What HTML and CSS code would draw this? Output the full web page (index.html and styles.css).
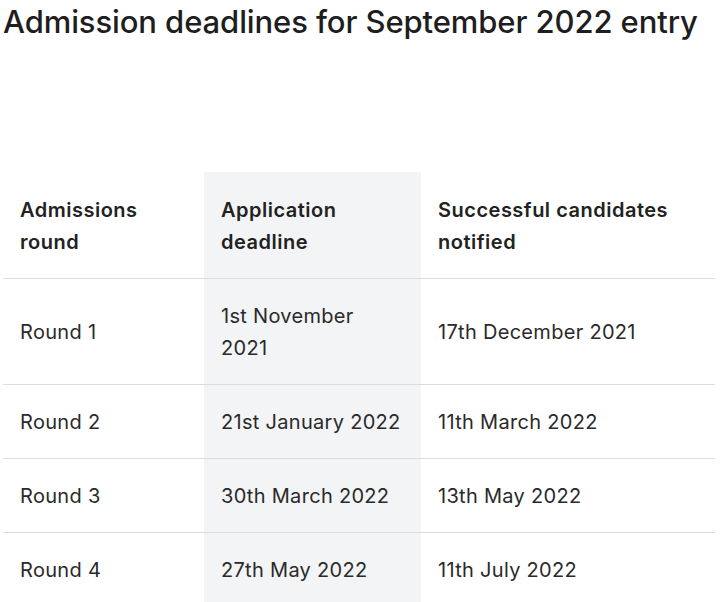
FILE: index.html
```html
<!DOCTYPE html>
<html lang="en">
<head>
<meta charset="utf-8">
<title>Admission deadlines</title>
<link rel="stylesheet" href="styles.css">
</head>
<body>
<main class="page">
  <h1 class="title">Admission deadlines for September 2022 entry</h1>
  <table class="deadlines">
    <colgroup>
      <col class="c1">
      <col class="c2">
      <col class="c3">
    </colgroup>
    <thead>
      <tr>
        <th>Admissions<br>round</th>
        <th class="hl">Application<br>deadline</th>
        <th>Successful candidates<br>notified</th>
      </tr>
    </thead>
    <tbody>
      <tr>
        <td>Round 1</td>
        <td class="hl">1st November<br>2021</td>
        <td>17th December 2021</td>
      </tr>
      <tr>
        <td>Round 2</td>
        <td class="hl">21st January 2022</td>
        <td>11th March 2022</td>
      </tr>
      <tr>
        <td>Round 3</td>
        <td class="hl">30th March 2022</td>
        <td>13th May 2022</td>
      </tr>
      <tr>
        <td>Round 4</td>
        <td class="hl">27th May 2022</td>
        <td>11th July 2022</td>
      </tr>
    </tbody>
  </table>
</main>
</body>
</html>
```
FILE: styles.css
```css
html, body {
  margin: 0;
  padding: 0;
  background: #ffffff;
}
body {
  font-family: Inter, "Liberation Sans", Arial, sans-serif;
  color: #222222;
}
.page {
  padding: 0 0 0 3px;
  width: 712px;
}
.title {
  margin: 0;
  font-size: 31px;
  font-weight: 500;
  line-height: 44px;
  letter-spacing: -0.1px;
  color: #1e1e1e;
}
.deadlines {
  margin-top: 128px;
  width: 712px;
  border-collapse: collapse;
  table-layout: fixed;
}
.c1 { width: 201px; }
.c2 { width: 217px; }
.c3 { width: 294px; }
th, td {
  text-align: left;
  vertical-align: middle;
  padding: 20.5px 17px;
  font-size: 20px;
  line-height: 32px;
}
th {
  font-weight: 600;
  padding-top: 22px;
  padding-bottom: 20px;
  letter-spacing: 0.5px;
  color: #222222;
}
td {
  font-weight: 400;
  letter-spacing: 0.3px;
  color: #2a2a2a;
}
thead tr,
tbody tr {
  border-bottom: 1px solid #dcdcdc;
}
tbody tr:last-child {
  border-bottom: none;
}
.hl {
  background: #f3f4f5;
}
```
